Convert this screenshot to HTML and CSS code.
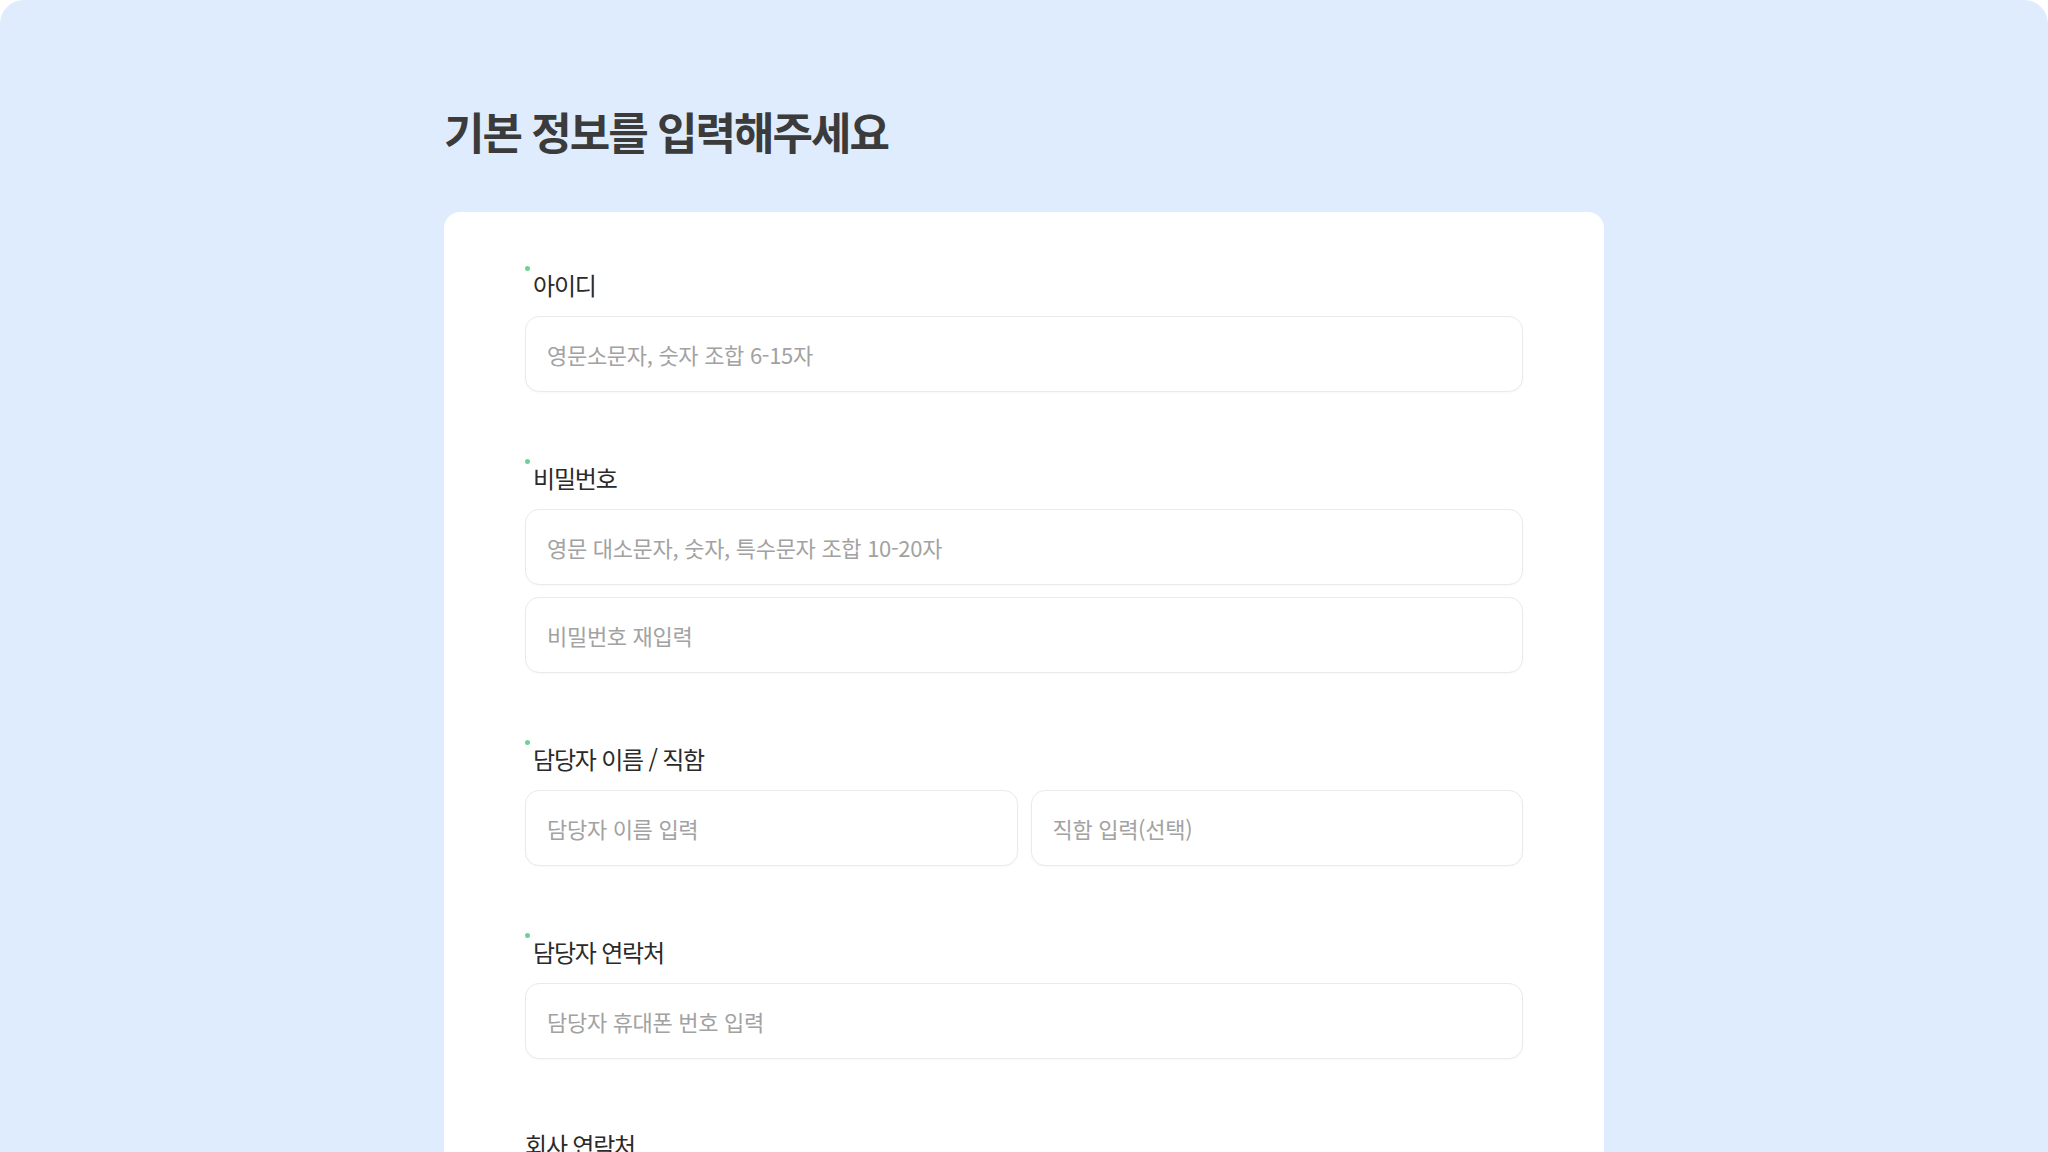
FILE: index.html
```html
<!DOCTYPE html>
<html lang="ko">
<head>
    <meta charset="UTF-8" />
    <title>기본 정보 입력</title>
    <link rel="stylesheet" href="styles.css">
</head>
<body>
    <div class="frame">
        <div class="wrap">
            <h1 class="title">기본 정보를 입력해주세요</h1>

            <form class="card" onsubmit="return false;">
                <div class="field">
                    <label class="label required" for="userid">아이디</label>
                    <input class="input" type="text" id="userid" placeholder="영문소문자, 숫자 조합 6-15자" />
                </div>

                <div class="field">
                    <label class="label required" for="pw">비밀번호</label>
                    <input class="input" type="password" id="pw" placeholder="영문 대소문자, 숫자, 특수문자 조합 10-20자" />
                    <input class="input" type="password" id="pw2" placeholder="비밀번호 재입력" />
                </div>

                <div class="field">
                    <label class="label required" for="name">담당자 이름 / 직함</label>
                    <div class="row">
                        <input class="input" type="text" id="name" placeholder="담당자 이름 입력" />
                        <input class="input" type="text" id="position" placeholder="직함 입력(선택)" />
                    </div>
                </div>

                <div class="field">
                    <label class="label required" for="phone">담당자 연락처</label>
                    <input class="input" type="tel" id="phone" placeholder="담당자 휴대폰 번호 입력" />
                </div>

                <div class="field">
                    <label class="label" for="tel">회사 연락처</label>
                    <input class="input" type="tel" id="tel" placeholder="회사 대표 번호 입력" />
                </div>
            </form>
        </div>
    </div>
</body>
</html>
```

FILE: styles.css
```css
body{
    margin:0;
    background:#ffffff;
    font-family:"Noto Sans CJK KR", "Noto Sans", sans-serif;
    overflow:hidden;
}
.frame{
    background:#deecfd;
    border-radius:24px;
    min-height:1400px;
}
.wrap{
    width:1160px;
    margin:0 auto;
    padding-top:103px;
}
.title{
    margin:0;
    font-size:44px;
    line-height:56px;
    font-weight:700;
    letter-spacing:-2px;
    color:#3b3b3b;
}
.card{
    margin-top:53px;
    background:#ffffff;
    border-radius:16px;
    padding:54px 81px 80px;
}
.field{
    display:flex;
    flex-direction:column;
    gap:12px;
}
.field + .field{
    margin-top:67px;
}
.label{
    display:flex;
    align-items:flex-start;
    font-size:24px;
    line-height:32px;
    font-weight:400;
    letter-spacing:-1.2px;
    color:#2a2a2a;
    padding-top:3px;
    margin-bottom:3px;
}
.required::before{
    content:"";
    width:5px;
    height:5px;
    border-radius:50%;
    background:#6dd29a;
    margin-top:-3px;
    margin-right:3px;
    flex-shrink:0;
}
.row{
    display:flex;
    gap:13px;
}
.row .input{
    flex:1;
    min-width:0;
}
.input{
    box-sizing:border-box;
    height:76px;
    width:100%;
    border:1px solid #eaeaea;
    border-radius:14px;
    padding:0 21px;
    font-family:"Noto Sans CJK KR", "Noto Sans", sans-serif;
    font-size:22px;
    letter-spacing:-0.3px;
    color:#333333;
    background:#ffffff;
    box-shadow:0 1px 2px rgba(0,0,0,0.03);
    outline:none;
}
.input::placeholder{
    color:#a2a2a2;
}
```
